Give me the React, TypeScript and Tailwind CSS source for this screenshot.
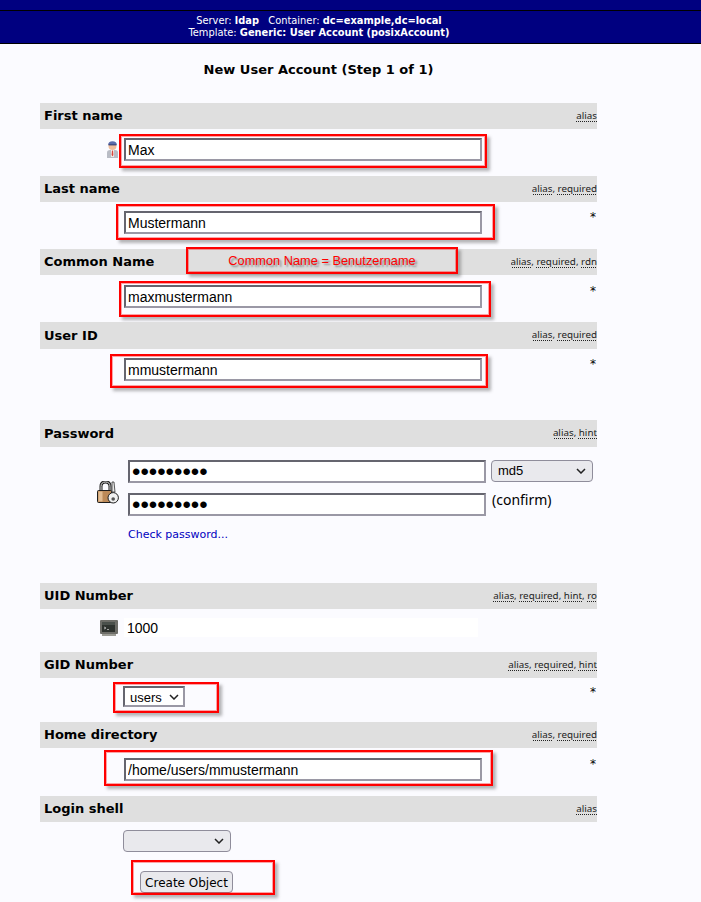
import type { ReactNode } from "react";

const sans = "font-['DejaVu_Sans',sans-serif]";
const field = "font-['Liberation_Sans',sans-serif] text-[14px] text-black";
const pick = "font-['Liberation_Sans',sans-serif] text-[13px] text-black";

function UserIcon() {
  return (
    <svg width="11" height="17" viewBox="0 0 11 17">
      <path d="M0 17 L0 11.500 Q0 9 3 9 L8 9 Q11 9 11 11.500 L11 17 Z" fill="#b9bcc5" />
      <path d="M4 9 L7 9 L6.800 16 L4.200 16 Z" fill="#f6f6f6" />
      <path d="M4.900 9.500 L6.100 9.500 L6.400 14 L5.500 15.500 L4.600 14 Z" fill="#d9463c" />
      <circle cx="5.500" cy="5" r="4" fill="#eebd9a" />
      <path d="M1.200 3.800 Q1.200 .3 5.500 .3 Q9.800 .3 9.800 3.800 Z" fill="#5a6cab" />
      <rect x="1.500" y="3.200" width="8" height="1.200" fill="#34437c" />
    </svg>
  );
}

function LockIcon() {
  return (
    <svg width="22" height="23" viewBox="0 0 22 23">
      <path d="M4 10 V5.500 Q4 1 8.500 1 Q13 1 13 5.500 V10" fill="none" stroke="#1d1d1d" strokeWidth="3" />
      <path d="M4 10 V5.500 Q4 1 8.500 1 Q13 1 13 5.500 V10" fill="none" stroke="#e0e0e0" strokeWidth="1" />
      <rect x=".5" y="9.500" width="14" height="12" rx="1" fill="#bd8a58" stroke="#1d1d1d" />
      <rect x="1.500" y="10.500" width="4" height="10" fill="#e3bd93" />
      <path d="M15 1 L17 1 L18 11 L15 11 Z" fill="#e8e8e8" stroke="#333" strokeWidth=".8" />
      <circle cx="16.200" cy="16.800" r="5.200" fill="#f1f1f1" stroke="#1d1d1d" />
      <circle cx="16.200" cy="18" r="1.800" fill="#555" />
    </svg>
  );
}

function TerminalIcon() {
  return (
    <svg width="18" height="16" viewBox="0 0 18 16">
      <rect x="0" y="0" width="18" height="14" rx="1" fill="#6d6d68" />
      <rect x="2" y="2" width="13" height="10" fill="#2e332f" />
      <rect x="2" y="2" width="13" height="3" fill="#4a504b" />
      <path d="M4 7 L6 8 L4 9 M7 9.500 H9" stroke="#d5d5d5" strokeWidth=".7" fill="none" />
      <rect x="2" y="14" width="14" height="2" fill="#9b9b94" />
    </svg>
  );
}

function Chevron({ className }: { className: string }) {
  return (
    <svg width="10" height="6" viewBox="0 0 10 6" className={`pointer-events-none absolute top-[8px] ${className}`}>
      <path d="M1 1 L5 5 L9 1" fill="none" stroke="#222" strokeWidth="1.500" />
    </svg>
  );
}

function Header({ title, hints, className, children }: { title: string; hints: string[]; className: string; children?: ReactNode }) {
  return (
    <div className={`relative ml-[40px] flex w-[557px] items-center justify-between bg-[#dfdfdf] pl-[4px] ${className}`}>
      <span className={`${sans} text-[13px] font-bold text-black`}>{title}</span>
      <span className="mb-px h-[14px] max-w-[200px] overflow-hidden whitespace-nowrap font-['Noto_Sans',sans-serif] text-[9.800px] leading-[14px] text-[#222]">
        {hints.map((h, i) => (
          <span key={h}>
            {i > 0 && ", "}
            <span className="underline decoration-dotted underline-offset-2">{h}</span>
          </span>
        ))}
      </span>
      {children}
    </div>
  );
}

function TextBox({ value, type = "text" }: { value: string; type?: string }) {
  return (
    <input
      type={type}
      defaultValue={value}
      className={`block h-[23px] w-[358px] border-2 border-t-[#65656f] border-l-[#65656f] border-r-[#9a98a5] border-b-[#9a98a5] bg-white px-[2px] outline-none ${type === "password" ? "font-['Liberation_Sans',sans-serif] text-[24px] text-black" : field}`}
    />
  );
}

// one form row: icon gutter, control, required star at the far right
function Row({ icon, required, className, children }: { icon?: ReactNode; required?: boolean; className: string; children: ReactNode }) {
  return (
    <div className={`relative flex w-[597px] items-start ${className}`}>
      <div className="flex w-[124px] justify-end pr-[6px]">{icon}</div>
      {children}
      {required && <span className={`ml-auto pt-px pr-px text-[12px] leading-[10px] text-black ${sans}`}>*</span>}
    </div>
  );
}

// red boxes drawn on the screenshot, they sit over the form
function Mark({ className, children }: { className: string; children?: ReactNode }) {
  return (
    <div className={`pointer-events-none absolute border-2 border-[#ff0000] shadow-[3px_3px_3px_rgba(90,90,90,0.45),inset_0_0_0_1px_rgba(255,0,0,0.35)] ${className}`}>
      {children}
    </div>
  );
}

export default function App() {
  return (
    <div className="h-[902px] w-[701px] overflow-hidden bg-[#fbfbff]">
      <div className="h-[10px] bg-[#000080]" />
      <header className={`flex h-[34px] flex-col items-center justify-center border-y border-black bg-[#000080] pr-[63px] text-[9.850px] leading-[12px] text-white ${sans}`}>
        <div>
          Server: <b>ldap</b>&nbsp;&nbsp; Container: <b>dc=example,dc=local</b>
        </div>
        <div>
          Template: <b>Generic: User Account</b> <b>(posixAccount)</b>
        </div>
      </header>

      <h1 className={`mt-[18px] mb-[25px] ml-[40px] h-[16px] w-[557px] text-center text-[13px] leading-[16px] font-bold text-black ${sans}`}>
        New User Account (Step 1 of 1)
      </h1>

      <main>
        <Header title="First name" hints={["alias"]} className="h-[26px]" />
        <Row className="h-[47px] pt-[9px]" icon={<div className="pt-[3px]"><UserIcon /></div>}>
          <TextBox value="Max" />
          <Mark className="left-[119px] top-[5px] h-[34px] w-[368px]" />
        </Row>

        <Header title="Last name" hints={["alias", "required"]} className="h-[26px]" />
        <Row className="h-[47px] pt-[9px]" required>
          <TextBox value="Mustermann" />
          <Mark className="left-[116px] top-[2px] h-[36px] w-[379px]" />
        </Row>

        <Header title="Common Name" hints={["alias", "required", "rdn"]} className="h-[26px]">
          <Mark className="left-[146px] top-[-2px] flex h-[27px] w-[272px] items-center justify-center bg-[#dfdfdf] font-['Liberation_Sans',sans-serif] text-[12.800px] text-[#ff0000] [text-shadow:2px_2px_2px_rgba(70,70,70,0.6)]">
            Common Name = Benutzername
          </Mark>
        </Header>
        <Row className="h-[47px] pt-[10px]" required>
          <TextBox value="maxmustermann" />
          <Mark className="left-[119px] top-[6px] h-[36px] w-[372px]" />
        </Row>

        <Header title="User ID" hints={["alias", "required"]} className="h-[27px]" />
        <Row className="h-[71px] pt-[9px]" required>
          <TextBox value="mmustermann" />
          <Mark className="left-[110px] top-[5px] h-[34px] w-[378px]" />
        </Row>

        <Header title="Password" hints={["alias", "hint"]} className="h-[27px]" />
        <div className="flex h-[136px] w-[600px] items-start pt-[13px]">
          <div className="flex w-[128px] justify-end pt-[21px] pr-[9px]">
            <LockIcon />
          </div>
          <div className="flex flex-col">
            <div className="flex items-start gap-[5px]">
              <TextBox value="mustermn1" type="password" />
              <div className="relative">
                <select className={`block h-[22px] w-[102px] appearance-none rounded-[4px] border border-[#8f8d9b] bg-[#e9e9ed] pl-[6px] ${pick}`}>
                  <option>md5</option>
                </select>
                <Chevron className="right-[7px]" />
              </div>
            </div>
            <div className="mt-[10px] flex items-start gap-[6px]">
              <TextBox value="mustermn1" type="password" />
              <span className="font-['Noto_Sans',sans-serif] text-[14px] leading-[13px] text-black">(confirm)</span>
            </div>
            <a className={`mt-[11px] block text-[11px] text-[#0000c0] ${sans}`}>Check password...</a>
          </div>
        </div>

        <Header title="UID Number" hints={["alias", "required", "hint", "ro"]} className="h-[26px]" />
        <Row className="h-[43px] pt-[9px]" icon={<div className="pt-[2px]"><TerminalIcon /></div>}>
          <div className={`flex h-[19px] w-[354px] items-center bg-white pt-px pl-[3px] ${field}`}>1000</div>
        </Row>

        <Header title="GID Number" hints={["alias", "required", "hint"]} className="h-[26px]" />
        <Row className="h-[44px] pt-[8px]" required>
          <div className="relative -ml-px w-[62px]">
            <select className={`block h-[21px] w-[62px] appearance-none border-2 border-t-[#65656f] border-l-[#65656f] border-r-[#9a98a5] border-b-[#9a98a5] bg-white pl-[5px] ${pick}`}>
              <option>users</option>
            </select>
            <Chevron className="right-[6px]" />
          </div>
          <Mark className="left-[113px] top-[4px] h-[31px] w-[106px]" />
        </Row>

        <Header title="Home directory" hints={["alias", "required"]} className="h-[26px]" />
        <Row className="h-[48px] pt-[10px]" required>
          <TextBox value="/home/users/mmustermann" />
          <Mark className="left-[104px] top-[2px] h-[36px] w-[389px]" />
        </Row>

        <Header title="Login shell" hints={["alias"]} className="h-[26px]" />
        <div className="relative flex flex-col items-start pt-[8px] pl-[123px]">
          <div className="relative w-[108px]">
            <select className={`block h-[22px] w-[108px] appearance-none rounded-[4px] border border-[#8f8d9b] bg-[#e9e9ed] ${pick}`} />
            <Chevron className="right-[7px]" />
          </div>
          <button className={`mt-[19px] ml-[17px] h-[22px] w-[93px] rounded-[4px] border border-[#8f8d9b] bg-[#e9e9ed] pt-px text-[12px] text-black ${sans}`}>
            Create Object
          </button>
          <Mark className="left-[131px] top-[38px] h-[35px] w-[144px]" />
        </div>
      </main>
    </div>
  );
}
